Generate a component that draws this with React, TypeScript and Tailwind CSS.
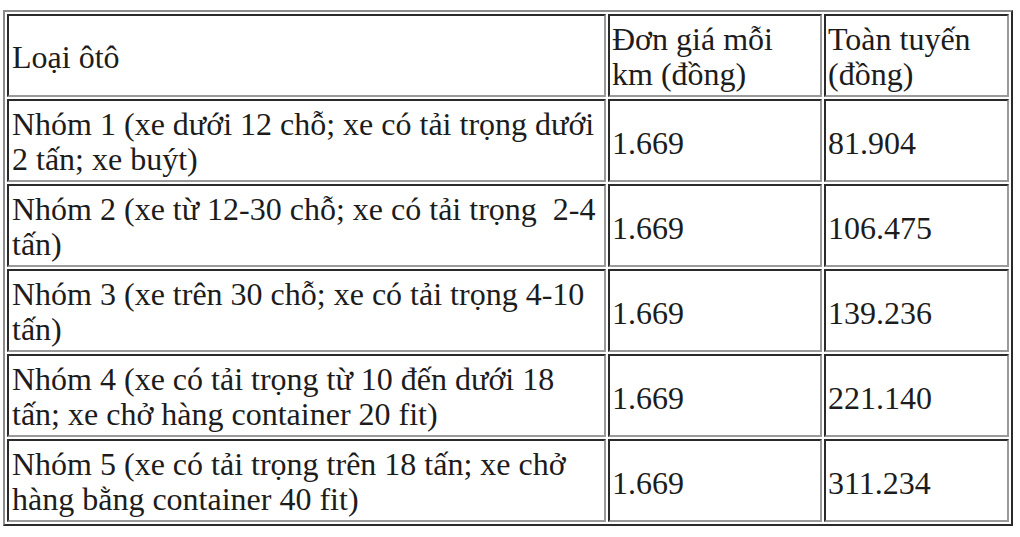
const rows = [
  {
    lines: ["Nhóm 1 (xe dưới 12 chỗ; xe có tải trọng dưới", "2 tấn; xe buýt)"],
    price: "1.669",
    total: "81.904",
  },
  {
    lines: ["Nhóm 2 (xe từ 12-30 chỗ; xe có tải trọng\u00a0 2-4", "tấn)"],
    price: "1.669",
    total: "106.475",
  },
  {
    lines: ["Nhóm 3 (xe trên 30 chỗ; xe có tải trọng 4-10", "tấn)"],
    price: "1.669",
    total: "139.236",
  },
  {
    lines: ["Nhóm 4 (xe có tải trọng từ 10 đến dưới 18", "tấn; xe chở hàng container 20 fit)"],
    price: "1.669",
    total: "221.140",
  },
  {
    lines: ["Nhóm 5 (xe có tải trọng trên 18 tấn; xe chở", "hàng bằng container 40 fit)"],
    price: "1.669",
    total: "311.234",
  },
];

const cell =
  "h-[83px] border-2 border-t-[#2a2a2a] border-l-[#2a2a2a] border-b-[#9a9a9a] border-r-[#9a9a9a] align-middle px-[2px] py-0";

export default function App() {
  return (
    <div className="min-h-[537px] w-[1020px] bg-white pt-[10px] pl-[3px] font-[family-name:'Liberation_Serif',serif] text-[32px] leading-[35px] text-[#1c1c1c]">
      <table className="w-[1010px] table-fixed border-separate border-spacing-[2px] border-2 border-t-[#8c8c8c] border-l-[#8c8c8c] border-b-[#2a2a2a] border-r-[#2a2a2a]">
        <tbody>
          <tr>
            <td className={`${cell} w-[599px] pl-[3px]`}>
              <div className="pt-[4px]">Loại ôtô</div>
            </td>
            <td className={`${cell} w-[214px]`}>
              <div className="pt-[2px]">
                Đơn giá mỗi
                <br />
                km (đồng)
              </div>
            </td>
            <td className={`${cell} w-[185px]`}>
              <div className="pt-[2px]">
                Toàn tuyến
                <br />
                (đồng)
              </div>
            </td>
          </tr>
          {rows.map((r) => (
            <tr key={r.total}>
              <td className={`${cell} pl-[3px] whitespace-nowrap`}>
                <div className="pt-[3px]">
                  {r.lines[0]}
                  <br />
                  {r.lines[1]}
                </div>
              </td>
              <td className={cell}>
                <div className="pt-[5px]">{r.price}</div>
              </td>
              <td className={cell}>
                <div className="pt-[5px]">{r.total}</div>
              </td>
            </tr>
          ))}
        </tbody>
      </table>
    </div>
  );
}
